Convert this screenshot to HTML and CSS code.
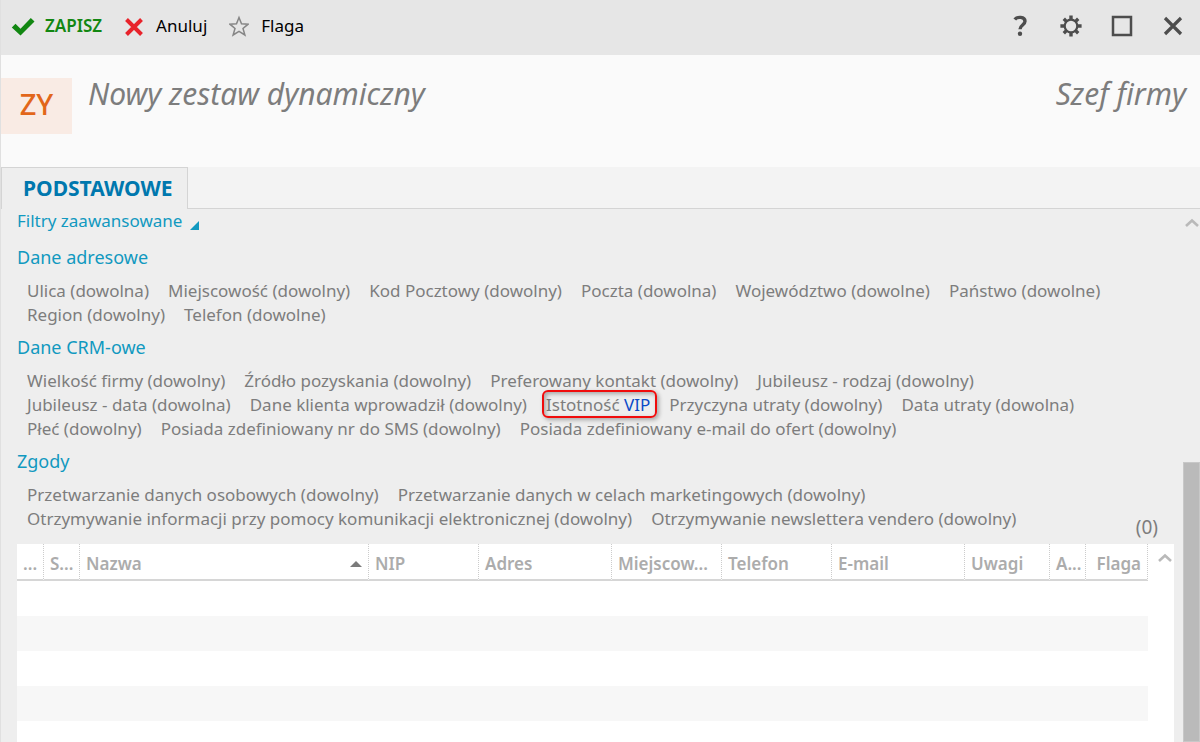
FILE: index.html
```html
<!DOCTYPE html>
<html lang="pl">
<head>
	<title>Nowy zestaw dynamiczny</title>
	<meta charset="utf-8">
	<link rel="stylesheet" href="styles.css">
</head>
<body>
<!-- toolbar -->
<div class="toolbar">
	<div class="actions">
		<button type="button" class="save">
			<svg width="24" height="24" viewBox="0 0 24 24"><path d="M.800 13.500l3.700-3.700 5 5L19.800 4l3.700 3.600L9.500 21.500z" fill="#128712"/></svg>
			<span>ZAPISZ</span>
		</button>
		<button type="button" class="cancel">
			<svg width="20" height="24" viewBox="0 0 20 24"><path d="M2.500 5.500l15 15M17.500 5.500l-15 15" fill="none" stroke="#e8232b" stroke-width="4"/></svg>
			<span>Anuluj</span>
		</button>
		<button type="button" class="flag">
			<svg width="20" height="24" viewBox="0 0 20 24"><path d="M10 3.500l2.500 6.300 6.600.4-5.100 4.200 1.900 6.600-5.900-3.600-5.900 3.600 1.900-6.600-5.100-4.200 6.600-.4z" fill="none" stroke="#868686" stroke-width="1.500"/></svg>
			<span>Flaga</span>
		</button>
	</div>
	<div class="windowButtons">
		<button type="button" aria-label="Pomoc">
			<svg width="22" height="22" viewBox="0 0 22 22"><path d="M5.800 4.500C8 1.500 16 1.300 16 6.300c0 3.700-5 3.700-5 8" fill="none" stroke="#4d4d4d" stroke-width="3.400"/><circle cx="11" cy="18.700" r="2.200" fill="#4d4d4d"/></svg>
		</button>
		<button type="button" aria-label="Ustawienia">
			<svg width="22" height="22" viewBox="0 0 22 22"><circle cx="11" cy="11" r="6.300" fill="none" stroke="#4d4d4d" stroke-width="2.200"/><path d="M11 .400v4M11 17.600v4M.400 11h4M17.600 11h4M3.800 3.800l2.800 2.800M15.400 15.400l2.800 2.800M18.200 3.800l-2.800 2.800M6.600 15.400l-2.800 2.800" fill="none" stroke="#4d4d4d" stroke-width="3.400"/></svg>
		</button>
		<button type="button" aria-label="Maksymalizuj">
			<svg width="22" height="22" viewBox="0 0 22 22"><path d="M2 2h18v18H2z" fill="none" stroke="#4d4d4d" stroke-width="2.500"/></svg>
		</button>
		<button type="button" aria-label="Zamknij">
			<svg width="22" height="22" viewBox="0 0 22 22"><path d="M3 3l16 16M19 3L3 19" fill="none" stroke="#4d4d4d" stroke-width="3.200"/></svg>
		</button>
	</div>
</div>

<!-- header -->
<div class="header">
	<div class="avatar">ZY</div>
	<h1>Nowy zestaw dynamiczny</h1>
	<div class="owner">Szef firmy</div>
</div>

<div class="tabs">
	<a href="#basic" class="active">PODSTAWOWE</a>
</div>

<!-- main -->
<div class="mainBody" id="basic">
	<div class="content">
		<button type="button" class="advanced">Filtry zaawansowane
			<svg width="10" height="12" viewBox="0 0 10 12"><path d="M10 0v9H1z" fill="#1199c0"/></svg>
		</button>

		<h2>Dane adresowe</h2>
		<div class="filters">
			<a href="#">Ulica (dowolna)</a>
			<a href="#">Miejscowość (dowolny)</a>
			<a href="#">Kod Pocztowy (dowolny)</a>
			<a href="#">Poczta (dowolna)</a>
			<a href="#">Województwo (dowolne)</a>
			<a href="#">Państwo (dowolne)</a>
			<a href="#">Region (dowolny)</a>
			<a href="#">Telefon (dowolne)</a>
		</div>

		<h2>Dane CRM-owe</h2>
		<div class="filters">
			<a href="#">Wielkość firmy (dowolny)</a>
			<a href="#">Źródło pozyskania (dowolny)</a>
			<a href="#">Preferowany kontakt (dowolny)</a>
			<a href="#">Jubileusz - rodzaj (dowolny)</a>
			<a href="#">Jubileusz - data (dowolna)</a>
			<a href="#">Dane klienta wprowadził (dowolny)</a>
			<a href="#" class="marked">Istotność <span>VIP</span></a>
			<a href="#">Przyczyna utraty (dowolny)</a>
			<a href="#">Data utraty (dowolna)</a>
			<a href="#">Płeć (dowolny)</a>
			<a href="#">Posiada zdefiniowany nr do SMS (dowolny)</a>
			<a href="#">Posiada zdefiniowany e-mail do ofert (dowolny)</a>
		</div>

		<h2>Zgody</h2>
		<div class="consents">
			<div class="filters">
				<a href="#">Przetwarzanie danych osobowych (dowolny)</a>
				<a href="#">Przetwarzanie danych w celach marketingowych (dowolny)</a>
				<a href="#">Otrzymywanie informacji przy pomocy komunikacji elektronicznej (dowolny)</a>
				<a href="#">Otrzymywanie newslettera vendero (dowolny)</a>
			</div>
			<div class="count">(0)</div>
		</div>

		<div class="grid">
			<table>
				<colgroup>
					<col class="c27"><col class="c36"><col><col class="c110"><col class="c133"><col class="c110">
					<col class="c110"><col class="c133"><col class="c85"><col class="c36"><col class="c62">
				</colgroup>
				<thead>
					<tr>
						<th>...</th>
						<th>S...</th>
						<th><div class="sorted">Nazwa <svg width="12" height="6" viewBox="0 0 12 6"><path d="M6 0l6 6H0z" fill="#7b7b7b"/></svg></div></th>
						<th>NIP</th>
						<th>Adres</th>
						<th>Miejscow...</th>
						<th>Telefon</th>
						<th>E-mail</th>
						<th>Uwagi</th>
						<th>A...</th>
						<th class="flagCol">Flaga</th>
					</tr>
				</thead>
				<tbody>
					<tr><td colspan="11"></td></tr>
					<tr><td colspan="11"></td></tr>
					<tr><td colspan="11"></td></tr>
					<tr><td colspan="11"></td></tr>
				</tbody>
			</table>
			<div class="gridScroll">
				<svg width="14" height="9" viewBox="0 0 14 9"><path d="M1 8l6-5.500L13 8" fill="none" stroke="#b9b9b9" stroke-width="2.600"/></svg>
			</div>
		</div>
	</div>
	<div class="scrollbar">
		<svg width="14" height="9" viewBox="0 0 14 9"><path d="M1 8l6-5.500L13 8" fill="none" stroke="#b9b9b9" stroke-width="2.600"/></svg>
		<div class="thumb"></div>
	</div>
</div>
</body>
</html>
```
FILE: styles.css
```css
*{
	box-sizing: border-box;
}

body{
	margin: 0;
	min-height: 100vh;
	display: flex;
	flex-direction: column;
	border-left: 1px solid #e0e0e0;
	background-color: #eee;
	color: #7d7d7d;
	font-family: "Noto Sans", "Open Sans", sans-serif;
	font-size: 17px;
	line-height: 24px;
}

h1,h2{
	margin: 0;
	font-weight: normal;
}

button{
	padding: 0;
	border: none;
	background: none;
	color: inherit;
	font: inherit;
	cursor: pointer;
}

a{
	color: inherit;
	text-decoration: none;
}

svg{
	display: block;
	flex: none;
}

.toolbar{
	display: flex;
	justify-content: space-between;
	align-items: center;
	height: 55px;
	padding: 0 16px 4px 10px;
	background-color: #e6e6e6;
	color: #000;
}

.actions,.windowButtons{
	display: flex;
	align-items: center;
}
.actions{
	gap: 22px;
}
.windowButtons{
	gap: 29px;
}
.actions button{
	display: flex;
	align-items: center;
	gap: 12px;
}
.actions .save{
	gap: 10px;
	color: #128712;
	font-weight: 600;
}

.header{
	display: flex;
	align-items: flex-start;
	height: 112px;
	padding: 23px 14px 0 0;
	background-color: #fafafa;
	font-size: 30px;
	line-height: 32px;
	font-style: italic;
}
.header h1{
	flex: 1;
	padding-left: 16px;
	font-size: 30px;
}
.avatar{
	width: 71px;
	height: 56px;
	background-color: #f9ebe4;
	color: #e2661a;
	font-size: 29px;
	font-style: normal;
	font-weight: 500;
	line-height: 52px;
	text-align: center;
}

.tabs{
	display: flex;
	height: 42px;
	border-bottom: 1px solid #d4d4d4;
	background-color: #f3f3f3;
}
.tabs .active{
	height: 42px;
	padding: 0 14px 0 21px;
	border: 1px solid #d4d4d4;
	border-bottom: none;
	background-color: #eee;
	color: #0078ae;
	font-size: 21px;
	font-weight: bold;
	line-height: 40px;
}

.mainBody{
	flex: 1;
	display: flex;
}
.content{
	flex: 1;
	display: flex;
	flex-direction: column;
	align-items: stretch;
	padding-left: 16px;
}

.advanced{
	display: flex;
	align-items: flex-end;
	align-self: flex-start;
	gap: 7px;
	color: #1199c0;
}
.content h2{
	color: #1199c0;
	font-size: 18px;
	padding: 4px 0 6px;
}
.advanced + h2{
	padding-top: 12px;
}

.filters{
	display: flex;
	flex-wrap: wrap;
	column-gap: 19px;
	padding: 4px 0 4px 10px;
}
.filters a:hover{
	color: #0a4ac8;
}
.marked{
	position: relative;
}
.marked span{
	color: #0a4ac8;
}
/* red frame lies over the neighbouring filters */
.marked::after{
	content: "";
	position: absolute;
	top: -3px;
	right: -7px;
	bottom: -1px;
	left: -4px;
	border: 2px solid #f00c0c;
	border-radius: 6px;
	box-shadow: 2px 2px 4px rgba(0,0,0,.3), inset 2px 2px 4px rgba(0,0,0,.3);
}

.consents{
	display: flex;
	align-items: flex-end;
	padding-bottom: 5px;
}
.consents .filters{
	flex: 1;
	padding-bottom: 8px;
}
.count{
	padding-right: 25px;
	font-size: 19px;
}

.grid{
	flex: 1;
	display: flex;
	align-items: flex-start;
	margin-right: 9px;
	background-color: #fff;
}
.grid table{
	flex: 1;
	width: 100%;
	table-layout: fixed;
	border-collapse: separate;
	border-spacing: 0;
}
.grid th{
	height: 37px;
	padding: 4px 6px 0;
	border-right: 1px dotted #ccc;
	border-bottom: 2px solid #d6d6d6;
	color: #acacac;
	font-weight: 600;
	text-align: left;
	white-space: nowrap;
	overflow: hidden;
}
.grid .flagCol{
	text-align: right;
}
.grid td{
	height: 35px;
	padding: 0;
}
.grid tbody tr:nth-child(even){
	background-color: #f7f7f7;
}
.sorted{
	display: flex;
	align-items: center;
	justify-content: space-between;
}
.c27{ width: 27px; }
.c36{ width: 36px; }
.c62{ width: 62px; }
.c85{ width: 85px; }
.c110{ width: 110px; }
.c133{ width: 133px; }
.gridScroll{
	flex: none;
	width: 26px;
	padding: 9px 0 0 10px;
}

.scrollbar{
	display: flex;
	flex-direction: column;
	align-items: center;
	width: 17px;
	padding-top: 9px;
}
.thumb{
	flex: 1;
	width: 17px;
	margin-top: 235px;
	border: 1px solid #c8c8c8;
	background-color: #bababa;
}
```
